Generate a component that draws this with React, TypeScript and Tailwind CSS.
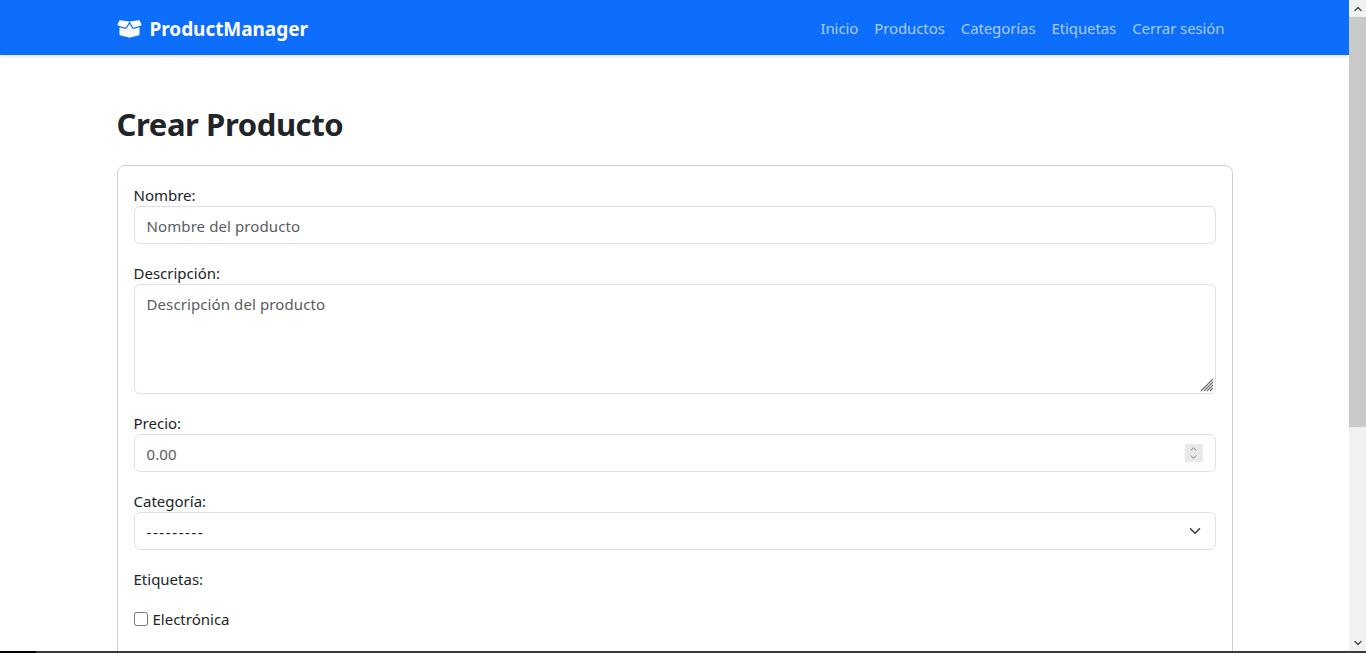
import { ChevronDown, ChevronUp } from "lucide-react";

const font = "font-['Noto_Sans','Open_Sans',sans-serif]";

function Box() {
  return (
    <svg viewBox="0 0 640 512" className="h-[20px] w-[25px] fill-white" aria-hidden="true">
      <path d="M58.9 42.1c3-6.1 9.6-9.6 16.3-8.7L320 64 564.8 33.4c6.7-.8 13.3 2.7 16.3 8.7l41.7 83.4c9 17.9-.6 39.6-19.8 45.1L439.6 217.3c-13.9 4-28.8-1.9-36.2-14.3L320 64 236.6 203c-7.4 12.4-22.3 18.3-36.2 14.3L37.1 170.6c-19.3-5.5-28.8-27.2-19.8-45.1L58.9 42.1zM321.1 128l54.9 91.4c14.9 24.8 44.6 36.6 72.5 28.6L576 211.6v167c0 22-15 41.2-36.4 46.6l-204 51c-10.2 2.6-20.9 2.6-31 0l-204-51C79 419.7 64 400.5 64 378.5v-167L191.6 248c27.8 8 57.6-3.8 72.5-28.6L318.9 128h2.2z" />
    </svg>
  );
}

function Field({ label, children }: { label: string; children: React.ReactNode }) {
  return (
    <div className="mb-4">
      <label className="block h-6 text-[15px] leading-[26px] text-[#212529]">{label}</label>
      {children}
    </div>
  );
}

const control =
  "block w-full rounded-md border border-[#dee2e6] bg-white px-3 text-[15px] tracking-[0.1px] text-[#595c5f]";

export default function App() {
  return (
    <div className={`flex h-[653px] w-full flex-col overflow-hidden bg-white ${font}`}>
      <div className="flex min-h-0 flex-1">
        <div className="min-w-0 flex-1 overflow-hidden">
          <nav className="h-[55px] bg-[#0d6efd] pt-[2px] shadow-[0_1px_4px_rgba(0,0,0,0.15)]">
            <div className="mx-auto flex h-full w-[1140px] items-center justify-between px-3">
              <div className="flex items-center gap-[8px]">
                <Box />
                <span className="pt-[2px] text-[19px] font-bold tracking-[-0.05px] text-white">ProductManager</span>
              </div>
              <div className="flex gap-4 pr-2 text-[15px] tracking-[-0.1px] text-[#a9cdfe]">
                <span>Inicio</span>
                <span>Productos</span>
                <span>Categorías</span>
                <span>Etiquetas</span>
                <span>Cerrar sesión</span>
              </div>
            </div>
          </nav>
          <main className="mx-auto w-[1140px] px-3 pt-[47px]">
            <h1 className="mb-[19px] h-[44px] text-[31px] leading-[44px] font-bold tracking-[-0.42px] text-[#212529]">
              Crear Producto
            </h1>
            <div className="rounded-lg border border-[#cfcfcf] p-4 pb-[60px]">
              <Field label="Nombre:">
                <div className={`${control} flex h-[38px] items-center pt-[2px]`}>Nombre del producto</div>
              </Field>
              <Field label="Descripción:">
                <div className={`${control} relative h-[110px] pt-[7px] leading-6`}>
                  Descripción del producto
                  <svg viewBox="0 0 14 14" className="absolute right-px bottom-px h-[14px] w-[14px] stroke-[#6b6b6b]">
                    <path d="M1 13 13 1M4 13 13 4M7 13 13 7M10 13 13 10" strokeWidth="1.1" />
                  </svg>
                </div>
              </Field>
              <Field label="Precio:">
                <div className={`${control} flex h-[38px] items-center justify-between`}>
                  <span className="pt-[2px]">0.00</span>
                  <span className="flex h-[18px] w-[18px] flex-col items-center justify-center bg-[#e9e9ed] text-[#77777c]">
                    <ChevronUp size={11} strokeWidth={2.2} className="-mb-px" />
                    <ChevronDown size={11} strokeWidth={2.2} className="-mt-px" />
                  </span>
                </div>
              </Field>
              <Field label="Categoría:">
                <div className={`${control} flex h-[38px] items-center justify-between text-[#212529]`}>
                  <span className="pt-[2px] tracking-[1.6px]">---------</span>
                  <ChevronDown size={18} strokeWidth={2} className="mr-[-1px] text-[#343a40]" />
                </div>
              </Field>
              <div className="h-6 text-[15px] leading-[26px] text-[#212529]">Etiquetas:</div>
              <div className="mt-[17px] flex h-6 items-center gap-[5px] text-[15px] text-[#212529]">
                <span className="h-[14px] w-[14px] rounded-[2.5px] border border-[#767676] bg-white" />
                <span>Electrónica</span>
              </div>
            </div>
          </main>
        </div>
        <div className="flex w-[17px] shrink-0 flex-col bg-[#f1f1f1]">
          <div className="flex h-[17px] items-center justify-center text-[#505050]">
            <ChevronUp size={12} strokeWidth={3} />
          </div>
          <div className="h-[410px] bg-[#c9c9c9]" />
          <div className="flex-1" />
          <div className="flex h-[17px] items-center justify-center text-[#505050]">
            <ChevronDown size={12} strokeWidth={3} />
          </div>
        </div>
      </div>
      <div className="flex h-[2px] shrink-0 bg-[#3a3a3a]">
        <div className="h-full w-[36px] bg-black" />
      </div>
    </div>
  );
}
